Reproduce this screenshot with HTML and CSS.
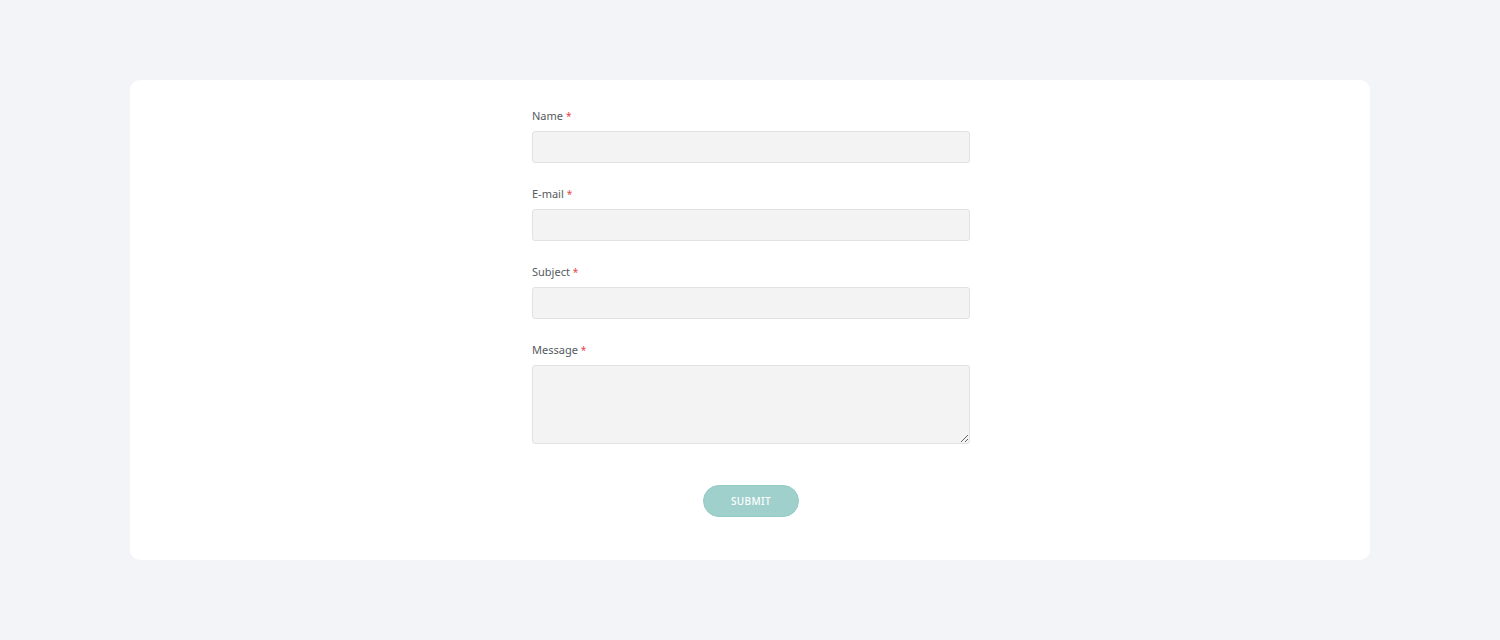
FILE: index.html
```html
<!DOCTYPE html>
<html lang="en">
<head>
<meta charset="utf-8">
<title>Contact form</title>
<link rel="stylesheet" href="styles.css">
</head>
<body>
<main class="page">
  <section class="card">
    <form class="form">
      <div class="field">
        <label class="label">Name <span class="req">*</span></label>
        <input class="input" type="text">
      </div>
      <div class="field">
        <label class="label">E-mail <span class="req">*</span></label>
        <input class="input" type="email">
      </div>
      <div class="field">
        <label class="label">Subject <span class="req">*</span></label>
        <input class="input" type="text">
      </div>
      <div class="field">
        <label class="label">Message <span class="req">*</span></label>
        <textarea class="input textarea"></textarea>
      </div>
      <div class="actions">
        <button class="submit" type="button">SUBMIT</button>
      </div>
    </form>
  </section>
</main>
</body>
</html>
```
FILE: styles.css
```css
* { box-sizing: border-box; }
html, body { margin: 0; padding: 0; }
body {
  background: #f3f4f8;
  font-family: "Noto Sans", "Open Sans", sans-serif;
  width: 1500px;
  height: 640px;
}
.page {
  padding: 80px 130px 0;
}
.card {
  background: #ffffff;
  border-radius: 10px;
  height: 480px;
  padding-top: 28px;
  display: flex;
  justify-content: center;
}
.form {
  width: 438px;
  margin-left: 2px;
  display: flex;
  flex-direction: column;
}
.field {
  display: flex;
  flex-direction: column;
  margin-bottom: 23px;
}
.label {
  font-size: 11px;
  line-height: 16px;
  color: #555a60;
  margin-bottom: 7px;
}
.req {
  color: #e2474d;
  margin-left: 0;
  font-size: 10px;
}
.input {
  display: block;
  width: 100%;
  height: 32px;
  border: 1px solid #e2e2e2;
  background: #f3f3f3;
  border-radius: 3px;
  margin: 0;
  padding: 0 10px;
  font: inherit;
}
.textarea {
  height: 79px;
  resize: vertical;
}
.actions {
  display: flex;
  justify-content: center;
  margin-top: 18px;
}
.submit {
  width: 96px;
  height: 32px;
  border: 1px solid #94cbc6;
  border-radius: 16px;
  background: #9fd0cc;
  color: #ffffff;
  font-family: inherit;
  font-size: 10px;
  font-weight: 500;
  letter-spacing: 0.4px;
  padding: 0;
}
```
